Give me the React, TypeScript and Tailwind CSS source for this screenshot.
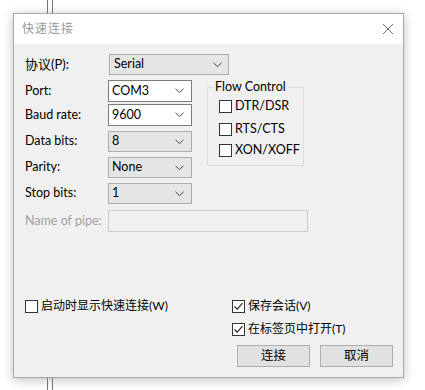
import React from "react";

const font = { fontFamily: 'Lato, "Noto Sans CJK SC", sans-serif' };

function Chevron() {
  return (
    <svg width="9" height="6" viewBox="0 0 9 6" className="shrink-0">
      <path d="M0.5 0.8 L4.5 4.6 L8.5 0.8" fill="none" stroke="#444" strokeWidth="1" />
    </svg>
  );
}

function Combo({ value, editable, w = "w-[84px]", h = "h-[22px]" }: { value: string; editable?: boolean; w?: string; h?: string }) {
  return (
    <div
      className={`${w} ${h} flex items-center justify-between pl-[3px] pr-[7px] border ${
        editable ? "bg-white border-[#7a7a7a]" : "bg-[#e5e5e5] border-[#adadad]"
      }`}
    >
      <span className="text-[12.5px] text-black leading-none">{value}</span>
      <Chevron />
    </div>
  );
}

function Box({ checked }: { checked?: boolean }) {
  return (
    <div className="w-[13px] h-[13px] bg-white border border-[#333] shrink-0 flex items-center justify-center">
      {checked && (
        <svg width="11" height="11" viewBox="0 0 11 11">
          <path d="M1.5 5.5 L4.2 8.2 L9.5 2.2" fill="none" stroke="#222" strokeWidth="1.2" />
        </svg>
      )}
    </div>
  );
}

function Row({ label, children, mt, h, muted }: { label: string; children: React.ReactNode; mt: string; h: string; muted?: boolean }) {
  return (
    <div className={`flex items-center ${mt} ${h}`}>
      <div className={`w-[83px] text-[12.5px] ${muted ? "text-[#a0a0a0]" : "text-black"}`}>{label}</div>
      {children}
    </div>
  );
}

function Lines({ h }: { h: string }) {
  return (
    <div className={`${h} flex ml-[47px] gap-[4px]`}>
      <div className="w-px h-full bg-[#777]" />
      <div className="w-px h-full bg-[#777]" />
    </div>
  );
}

export default function App() {
  return (
    <div className="w-[425px] h-[390px] bg-white overflow-hidden flex flex-col" style={font}>
      <Lines h="h-[13px]" />
      <div className="ml-[13px] w-[391px] h-[365px] border border-[#a8a8a8] shadow-[0_2px_10px_rgba(0,0,0,0.25)] flex flex-col bg-[#f0f0f0]">
        <div className="h-[30px] bg-white flex items-center justify-between pl-[8px] pr-[9px] shrink-0">
          <span className="text-[12px] text-[#9a9a9a] tracking-[1px]">快速连接</span>
          <svg width="12" height="12" viewBox="0 0 12 12">
            <path d="M1 1 L11 11 M11 1 L1 11" stroke="#6b6b6b" strokeWidth="1" fill="none" />
          </svg>
        </div>
        <div className="flex-1 pl-[11px] flex flex-col">
          <div className="flex items-center mt-[10px] h-[21px]">
            <div className="w-[84px] text-[13px] text-black">协议(P):</div>
            <div className="w-[120px] h-[21px] flex items-center justify-between pl-[4px] pr-[6px] border border-[#adadad] bg-[#e5e5e5]">
              <span className="text-[12.5px] leading-none">Serial</span>
              <Chevron />
            </div>
          </div>
          <div className="flex">
            <div className="flex flex-col">
              <Row label="Port:" mt="mt-[5px]" h="h-[22px]">
                <Combo value="COM3" editable />
              </Row>
              <Row label="Baud rate:" mt="mt-[2px]" h="h-[22px]">
                <Combo value="9600" editable />
              </Row>
              <Row label="Data bits:" mt="mt-[5px]" h="h-[21px]">
                <Combo value="8" h="h-[21px]" />
              </Row>
              <Row label="Parity:" mt="mt-[5px]" h="h-[21px]">
                <Combo value="None" h="h-[21px]" />
              </Row>
              <Row label="Stop bits:" mt="mt-[5px]" h="h-[21px]">
                <Combo value="1" h="h-[21px]" />
              </Row>
            </div>
            <fieldset className="ml-[15px] mt-[5px] w-[97px] h-[86px] border border-[#dcdcdc]">
              <legend className="text-[12.5px] px-[2px] ml-[5px] leading-[14px]">Flow Control</legend>
              <div className="pl-[11px] pt-[4px] flex flex-col">
                <div className="flex items-center h-[16px] gap-[3px]">
                  <Box />
                  <span className="text-[12.5px]">DTR/DSR</span>
                </div>
                <div className="flex items-center h-[16px] gap-[3px] mt-[7px]">
                  <Box />
                  <span className="text-[12.5px]">RTS/CTS</span>
                </div>
                <div className="flex items-center h-[16px] gap-[3px] mt-[5px]">
                  <Box />
                  <span className="text-[12.5px]">XON/XOFF</span>
                </div>
              </div>
            </fieldset>
          </div>
          <Row label="Name of pipe:" mt="mt-[6px]" h="h-[22px]" muted>
            <div className="w-[200px] h-[22px] border border-[#cccccc] bg-[#f0f0f0]" />
          </Row>
          <div className="flex mt-[66px]">
            <div className="w-[207px] flex items-center gap-[3px] h-[16px]">
              <Box />
              <span className="text-[12px]">启动时显示快速连接(W)</span>
            </div>
            <div className="flex flex-col">
              <div className="flex items-center gap-[3px] h-[16px]">
                <Box checked />
                <span className="text-[12px]">保存会话(V)</span>
              </div>
              <div className="flex items-center gap-[3px] h-[16px] mt-[7px]">
                <Box checked />
                <span className="text-[12px]">在标签页中打开(T)</span>
              </div>
            </div>
          </div>
          <div className="flex mt-[8px] ml-[212px] gap-[10px]">
            <div className="w-[73px] h-[22px] bg-[#e1e1e1] border border-[#adadad] flex items-center justify-center text-[12.5px]">
              连接
            </div>
            <div className="w-[73px] h-[22px] bg-[#e1e1e1] border border-[#adadad] flex items-center justify-center text-[12.5px]">
              取消
            </div>
          </div>
        </div>
      </div>
      <Lines h="flex-1" />
    </div>
  );
}
